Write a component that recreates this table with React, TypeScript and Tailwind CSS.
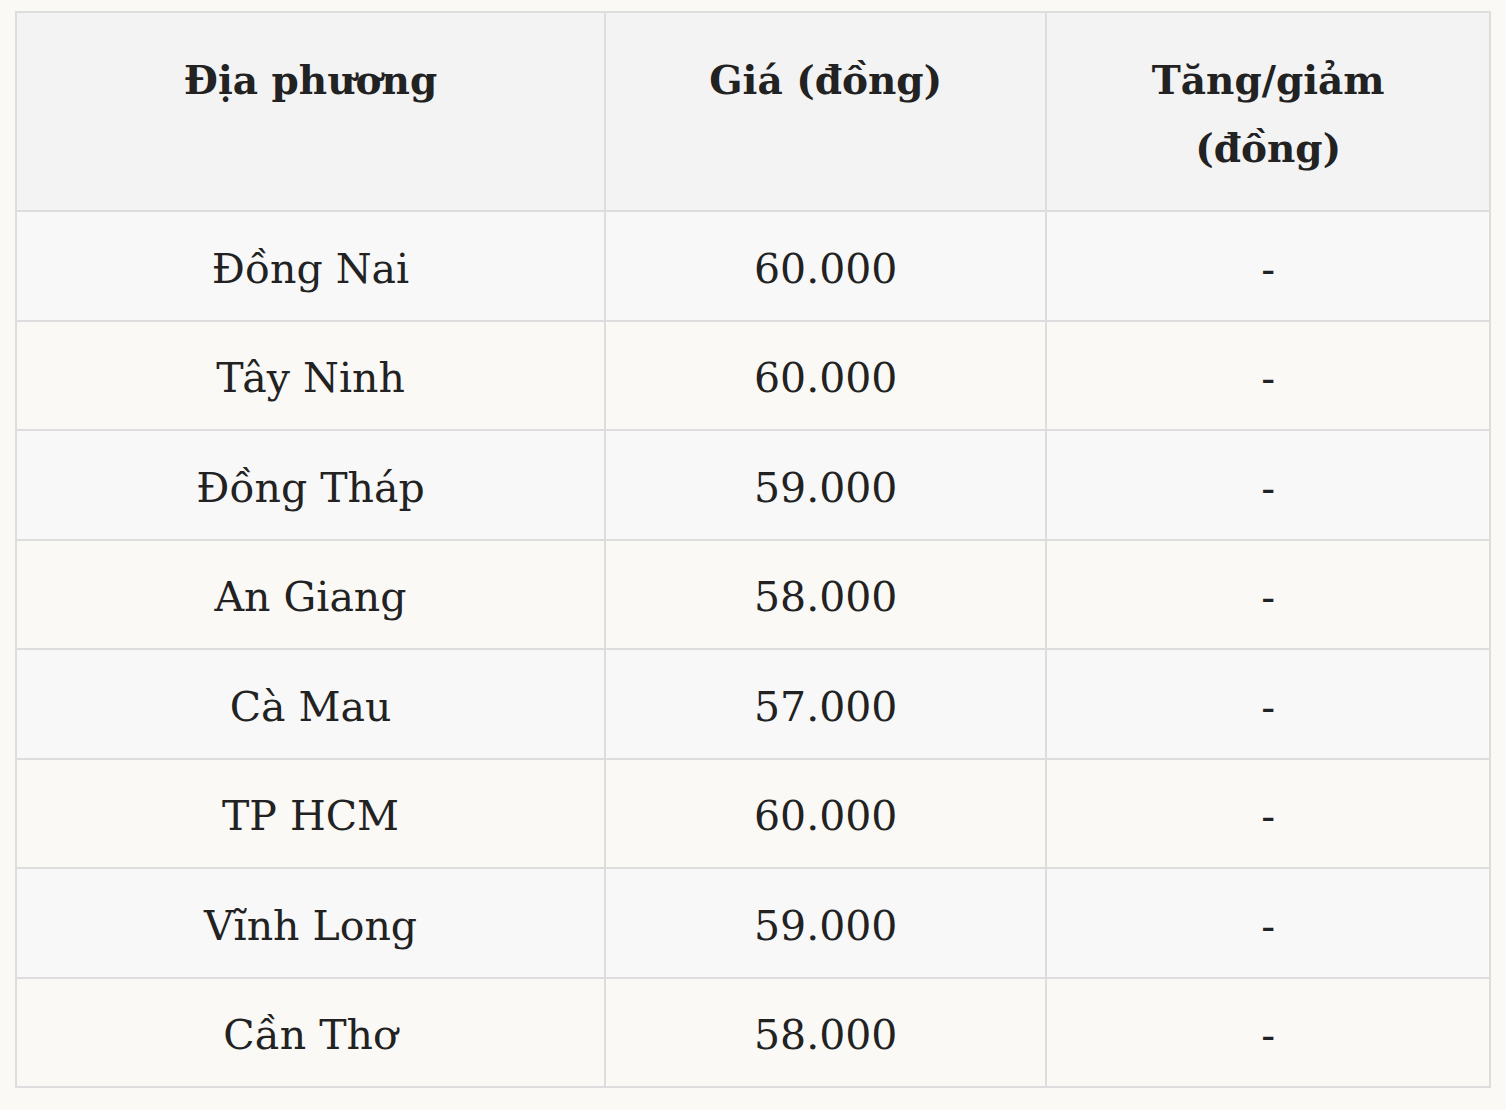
import React from "react";

const rows: [string, string, string][] = [
  ["Đồng Nai", "60.000", "-"],
  ["Tây Ninh", "60.000", "-"],
  ["Đồng Tháp", "59.000", "-"],
  ["An Giang", "58.000", "-"],
  ["Cà Mau", "57.000", "-"],
  ["TP HCM", "60.000", "-"],
  ["Vĩnh Long", "59.000", "-"],
  ["Cần Thơ", "58.000", "-"],
];

export default function App() {
  return (
    <div
      className="min-h-[1110px] w-[1506px] bg-[#faf9f6] pt-[11px] pl-[15px]"
      style={{ fontFamily: '"DejaVu Serif", "Liberation Serif", serif' }}
    >
      <table className="w-[1476px] border-collapse border-2 border-[#dddddd] text-[#222222]">
        <colgroup>
          <col className="w-[590px]" />
          <col className="w-[442px]" />
          <col className="w-[444px]" />
        </colgroup>
        <thead>
          <tr className="h-[197px] bg-[#f3f3f3]">
            <th className="border-2 border-[#dddddd] px-6 pt-[33px] pb-[28px] align-top text-[39px] leading-[68px] font-bold">
              Địa phương
            </th>
            <th className="border-2 border-[#dddddd] px-6 pt-[33px] pb-[28px] align-top text-[39px] leading-[68px] font-bold">
              Giá (đồng)
            </th>
            <th className="border-2 border-[#dddddd] px-6 pt-[33px] pb-[28px] align-top text-[39px] leading-[68px] font-bold">
              Tăng/giảm
              <br />
              (đồng)
            </th>
          </tr>
        </thead>
        <tbody>
          {rows.map((r, i) => (
            <tr
              key={r[0]}
              className={`h-[109.5px] ${i % 2 === 0 ? "bg-[#f8f8f8]" : "bg-[#faf9f6]"}`}
            >
              {r.map((c, j) => (
                <td
                  key={j}
                  className="border-2 border-[#dddddd] px-6 pt-[6px] pb-0 text-center align-middle text-[41px] leading-[60px] font-normal"
                >
                  {c}
                </td>
              ))}
            </tr>
          ))}
        </tbody>
      </table>
    </div>
  );
}
